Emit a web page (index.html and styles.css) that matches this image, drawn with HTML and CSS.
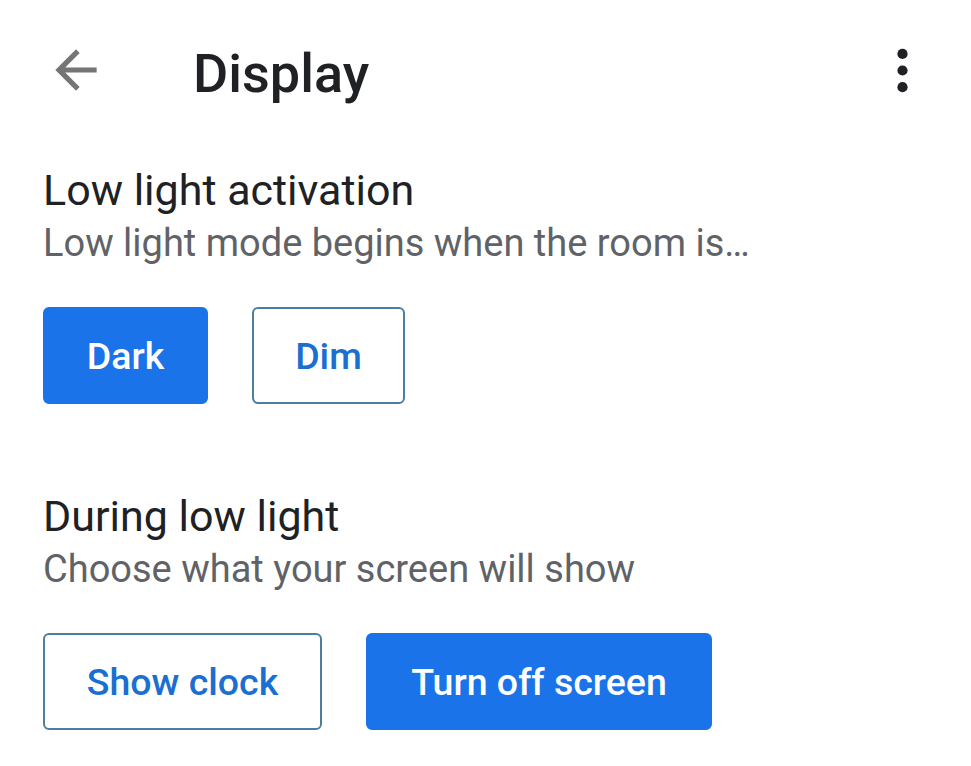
FILE: index.html
```html
<!DOCTYPE html>
<html lang="en">
<head>
    <meta charset="UTF-8">
    <meta name="viewport" content="width=device-width, initial-scale=1.0">
    <title>Display</title>
    <link rel="stylesheet" href="styles.css">
</head>
<body>
    <div class="topbar">
        <button class="icon-btn back" title="Back">
            <svg width="62" height="62" viewBox="0 0 24 24"><path d="M20 11H7.83l5.59-5.59L12 4l-8 8 8 8 1.41-1.41L7.83 13H20v-2z" fill="#757575"/></svg>
        </button>
        <h1 class="title">Display</h1>
        <button class="icon-btn more" title="More">
            <svg width="57" height="57" viewBox="0 0 24 24"><circle cx="12" cy="5" r="2.15" fill="#202124"/><circle cx="12" cy="12" r="2.15" fill="#202124"/><circle cx="12" cy="19" r="2.15" fill="#202124"/></svg>
        </button>
    </div>

    <div class="section">
        <div class="section-title">Low light activation</div>
        <div class="section-desc">Low light mode begins when the room is…</div>
        <div class="choices">
            <button class="choice selected choice-dark">Dark</button>
            <button class="choice choice-dim">Dim</button>
        </div>
    </div>

    <div class="section">
        <div class="section-title">During low light</div>
        <div class="section-desc">Choose what your screen will show</div>
        <div class="choices">
            <button class="choice choice-clock">Show clock</button>
            <button class="choice selected choice-off">Turn off screen</button>
        </div>
    </div>
</body>
</html>
```

FILE: styles.css
```css
body {
    font-family: Roboto, 'Noto Sans', Arial, sans-serif;
    background: #fff;
    margin: 0;
    padding: 0 0 0 43px;
    color: #202124;
}
.topbar {
    display: flex;
    align-items: center;
    height: 140px;
    margin-bottom: 25px;
    padding-right: 40px;
}
.icon-btn {
    background: none;
    border: none;
    padding: 0;
    display: flex;
    align-items: center;
    justify-content: center;
    cursor: pointer;
}
.back { margin-left: 2px; }
.title {
    font-size: 54px;
    font-weight: 500;
    margin: 7px 0 0 86px;
    flex: 1;
}
.section { margin-bottom: 87px; }
.section:last-child { margin-bottom: 0; }
.section-title {
    font-size: 43px;
    line-height: 50px;
}
.section-desc {
    font-size: 38px;
    line-height: 56px;
    color: #5f6368;
}
.choices {
    display: flex;
    gap: 44px;
    margin-top: 36px;
}
.choice {
    font-family: inherit;
    font-size: 37.5px;
    font-weight: 500;
    height: 97px;
    border-radius: 6px;
    border: 2px solid #4d7f9c;
    background: #fff;
    color: #1a6fd1;
    cursor: pointer;
}
.choice.selected {
    background: #1a73e8;
    border-color: #1a73e8;
    color: #fff;
}
.choice-dark { width: 165px; }
.choice-dim { width: 153px; }
.choice-clock { width: 279px; }
.choice-off { width: 346px; }
```
